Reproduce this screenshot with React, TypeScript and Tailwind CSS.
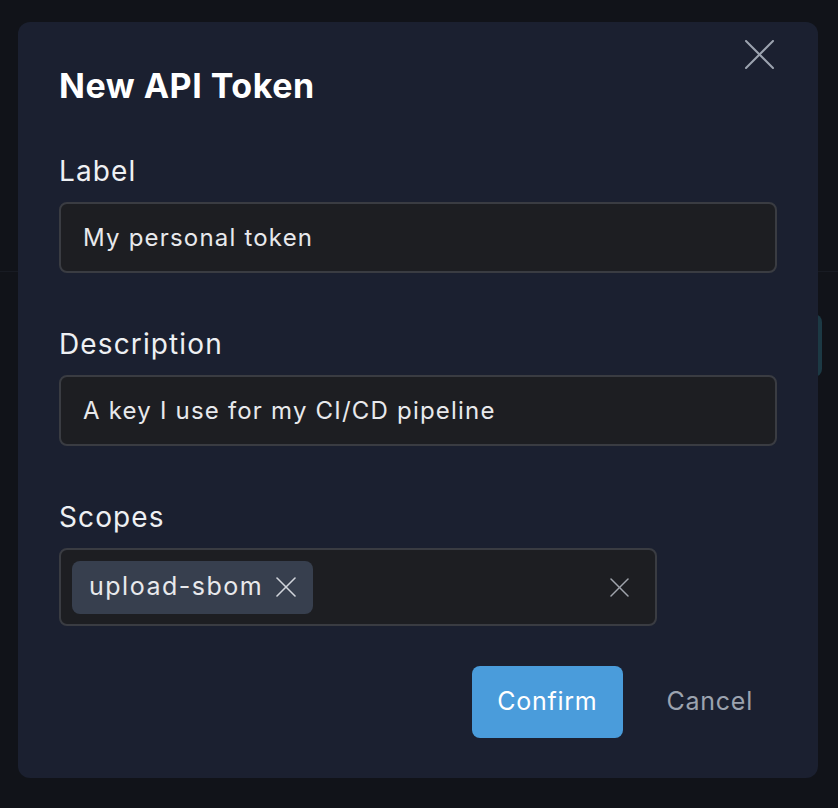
import React from "react";

const font = { fontFamily: "Inter, 'Noto Sans', sans-serif" };

const Cross: React.FC<{ size: number; stroke: number; className?: string }> = ({ size, stroke, className }) => (
  <svg width={size} height={size} viewBox={`0 0 ${size} ${size}`} className={className} fill="none">
    <line x1="1" y1="1" x2={size - 1} y2={size - 1} stroke="currentColor" strokeWidth={stroke} strokeLinecap="round" />
    <line x1={size - 1} y1="1" x2="1" y2={size - 1} stroke="currentColor" strokeWidth={stroke} strokeLinecap="round" />
  </svg>
);

const Field: React.FC<{ label: string; value: string }> = ({ label, value }) => (
  <div className="flex flex-col">
    <label className="text-[28px] leading-[34px] tracking-[0.04em] text-[#eef0f3]">{label}</label>
    <div className="mt-[14px] flex h-[71px] items-center rounded-lg border-2 border-[#3a3c42] bg-[#1d1e22] px-[22px]">
      <span className="text-[24px] tracking-[0.05em] text-[#e8e9ec]">{value}</span>
    </div>
  </div>
);

export default function App() {
  return (
    <div style={font} className="relative h-[808px] w-full overflow-hidden bg-[#111319]">
      {/* page behind the overlay */}
      <div className="h-[272px] border-b border-[#181b23]" />
      <div className="flex justify-end pr-4 pt-[42px]">
        <div className="h-[63px] w-[120px] rounded-lg bg-[#1c3944]" />
      </div>

      {/* dialog */}
      <div className="absolute left-[18px] top-[22px] flex h-[756px] w-[800px] flex-col rounded-xl bg-[#1b2030] px-[41px] pt-[44px] pb-[40px]">
        <button className="absolute right-[44px] top-[18px] text-[#9ca3af]">
          <Cross size={29} stroke={2} />
        </button>

        <h1 className="text-[34px] font-bold leading-[40px] tracking-[0.015em] text-white">New API Token</h1>

        <div className="mt-[48px] flex flex-col gap-[54px]">
          <Field label="Label" value="My personal token" />
          <Field label="Description" value="A key I use for my CI/CD pipeline" />

          <div className="flex flex-col">
            <label className="text-[28px] leading-[34px] tracking-[0.04em] text-[#eef0f3]">Scopes</label>
            <div className="mt-[14px] flex h-[78px] w-[598px] items-center rounded-lg border-2 border-[#3a3c42] bg-[#1d1e22] pl-[11px] pr-[26px]">
              <div className="flex h-[53px] items-center gap-[13px] rounded-lg bg-[#373f4e] pl-[17px] pr-[17px]">
                <span className="text-[25px] tracking-[0.06em] text-[#e8e9ec]">upload-sbom</span>
                <Cross size={20} stroke={1.6} className="text-[#d1d5db]" />
              </div>
              <div className="flex-1" />
              <Cross size={19} stroke={1.5} className="text-[#a0a4ac]" />
            </div>
          </div>
        </div>

        <div className="mt-[40px] flex justify-end gap-[20px]">
          <button className="h-[72px] rounded-lg bg-[#4a9cdb] px-[25px] text-[25px] tracking-[0.03em] text-white">
            Confirm
          </button>
          <button className="h-[72px] px-[24px] text-[25px] tracking-[0.03em] text-[#9ca3af]">Cancel</button>
        </div>
      </div>
    </div>
  );
}
